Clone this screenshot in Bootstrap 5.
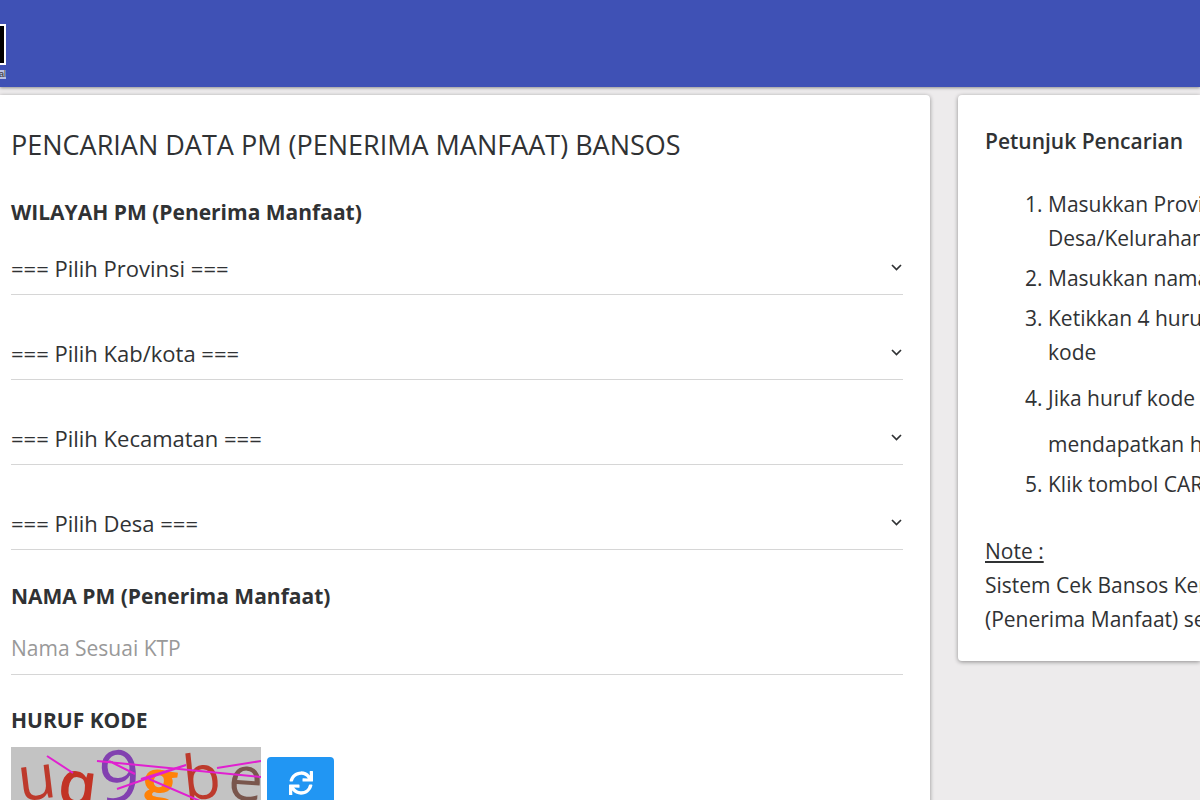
<!DOCTYPE html>
<html lang="id">
<head>
<meta charset="utf-8">
<meta name="viewport" content="width=device-width, initial-scale=1">
<title>Cek Bansos</title>
<link href="https://cdn.jsdelivr.net/npm/bootstrap@5.3.0/dist/css/bootstrap.min.css" rel="stylesheet">
<style>
body { background: #edebec; color: #303234; font-family: "Open Sans", "Noto Sans", sans-serif; font-size: 21px; line-height: 34px; }
.topbar { height: 87px; background: #3f51b5; box-shadow: 0 1px 3px rgba(0,0,0,.4); flex: none; }
.brand-mark { width: 6px; margin-top: 24px; }
.brand-mark svg { display: block; }
.panels { padding-top: 8px; gap: 28px; }
.panel { background: #fff; box-shadow: 0 1px 4px rgba(0,0,0,.4); }
.panel-search { flex: 0 0 77.5%; padding: 28px 27px 28px 11px; border-radius: 0 4px 4px 0; }
.panel-help { padding: 28px 0 25px 27px; border-radius: 4px 0 0 4px; white-space: nowrap; overflow: hidden; }
h1 { font-size: 27px; line-height: 44px; font-weight: 400; margin: 0 0 28px; }
.group-label { font-size: 21px; line-height: 34px; font-weight: 700; display: block; margin: 0; }
.line-field { height: 54px; padding: 0; border: 0; border-bottom: 1px solid #d6d6d6; border-radius: 0; font-size: 21px; line-height: 34px; color: #303234; background-color: transparent; }
.select-stack { padding-top: 12px; }
select.line-field { font-size: 22px; margin: 0 0 31px; background-position: right 1px center; background-size: 11px 11px;
  background-image: url("data:image/svg+xml,%3Csvg xmlns='http://www.w3.org/2000/svg' viewBox='0 0 11 11'%3E%3Cpath d='M1 3l4.500 4.500L10 3' fill='none' stroke='%23303234' stroke-width='1.700'/%3E%3C/svg%3E"); }
select.line-field:last-child { margin-bottom: 29px; }
.line-field::placeholder { color: #999; }
input.line-field { height: 62px; padding-top: 8px; margin-bottom: 28px; }
.captcha-row { margin-top: 10px; gap: 6px; }
.btn-reload { width: 67px; height: 52px; background: #2196f3; border-radius: 4px; margin-top: 10px; }
.captcha { width: 250px; height: 84px; flex: none; }
h2 { font-size: 21px; line-height: 36px; font-weight: 600; margin: 0 0 28px; }
.steps { padding-left: 63px; margin: 0 0 33px; }
.steps li { margin-bottom: 6px; }
.steps li.tall-step { line-height: 46px; margin-bottom: 0; }
.steps li:last-child { margin-bottom: 0; }
</style>
</head>
<body class="vh-100 overflow-hidden">
<header class="topbar position-relative">
  <a href="#" class="d-inline-block brand-mark" aria-label="Beranda">
    <svg width="6" height="56" viewBox="0 0 6 56"><path d="M0 0h6v41H0z" fill="#fff"/><path d="M0 2h4v37H0z"/><path d="M0 46h6v9H0z" fill="#b9bfe0"/><text x="6" y="53" text-anchor="end" font-size="9" font-family="Liberation Sans, sans-serif" fill="#333">al</text></svg>
  </a>
</header>
<main class="d-flex align-items-start panels">
  <form class="panel panel-search">
    <h1>PENCARIAN DATA PM (PENERIMA MANFAAT) BANSOS</h1>
    <label class="group-label" for="prov">WILAYAH PM (Penerima Manfaat)</label>
    <div class="select-stack">
      <select class="form-select line-field" id="prov"><option>=== Pilih Provinsi ===</option></select>
      <select class="form-select line-field" aria-label="Kab/kota"><option>=== Pilih Kab/kota ===</option></select>
      <select class="form-select line-field" aria-label="Kecamatan"><option>=== Pilih Kecamatan ===</option></select>
      <select class="form-select line-field" aria-label="Desa"><option>=== Pilih Desa ===</option></select>
    </div>
    <label class="group-label" for="nama">NAMA PM (Penerima Manfaat)</label>
    <input class="form-control line-field" id="nama" type="text" placeholder="Nama Sesuai KTP">
    <strong class="group-label">HURUF KODE</strong>
    <div class="d-flex align-items-start captcha-row">
      <svg class="captcha" viewBox="0 0 250 84" role="img" aria-label="Huruf kode">
        <path d="M0 0h250v84H0z" fill="#c3c3c3"/>
        <g font-family="Open Sans, sans-serif" font-size="62" font-weight="500">
          <text x="9" y="52" transform="rotate(-7 28 52)" fill="#bd3a2c">u</text>
          <text x="45" y="58" transform="rotate(7 62 58)" font-weight="600" fill="#c23325">q</text>
          <text x="89" y="55" transform="rotate(-3 110 55)" font-size="72" fill="#8240b0">9</text>
          <text x="128" y="57" transform="rotate(8 146 57)" font-weight="700" fill="#ff8208">g</text>
          <text x="174" y="52" transform="rotate(-6 190 52)" fill="#bd3a2c">b</text>
          <text x="216" y="53" transform="rotate(4 232 53)" fill="#79564d">e</text>
        </g>
        <path d="M36 9L62 26M86 14L250 30M106 42L175 18M206 21l44-7M98 14l26 13M138 32l58 25M130 32l45-14" fill="none" stroke="#e020d0" stroke-width="2"/>
      </svg>
      <button type="button" class="btn btn-reload p-0 d-flex align-items-center justify-content-center" aria-label="Muat ulang kode">
        <svg width="24" height="24" viewBox="0 0 512 512" fill="#fff"><path d="M440.650 12.570l4 82.770A247.160 247.160 0 0 0 255.830 8C134.730 8 33.910 94.920 12.290 209.820A12 12 0 0 0 24.090 224h49.050a12 12 0 0 0 11.670-9.260 175.910 175.910 0 0 1 317-56.940l-101.460-4.860a12 12 0 0 0-12.570 12v47.410a12 12 0 0 0 12 12H500a12 12 0 0 0 12-12V12a12 12 0 0 0-12-12h-47.370a12 12 0 0 0-11.980 12.570zM255.830 432a175.610 175.610 0 0 1-146-77.800l101.800 4.870a12 12 0 0 0 12.570-12v-47.400a12 12 0 0 0-12-12H12a12 12 0 0 0-12 12V500a12 12 0 0 0 12 12h47.350a12 12 0 0 0 12-12.600l-4.150-82.570A247.170 247.170 0 0 0 255.830 504c121.110 0 221.930-86.920 243.550-201.820a12 12 0 0 0-11.800-14.180h-49.050a12 12 0 0 0-11.670 9.260A175.860 175.860 0 0 1 255.830 432z"/></svg>
      </button>
    </div>
  </form>
  <aside class="panel panel-help flex-fill">
    <h2>Petunjuk Pencarian</h2>
    <ol class="steps">
      <li>Masukkan Provinsi<br>Desa/Kelurahan</li>
      <li>Masukkan nama</li>
      <li>Ketikkan 4 huruf<br>kode</li>
      <li class="tall-step">Jika huruf kode<br>mendapatkan h</li>
      <li>Klik tombol CARI</li>
    </ol>
    <div><u>Note :</u></div>
    <p class="m-0">Sistem Cek Bansos Kem<br>(Penerima Manfaat) se</p>
  </aside>
</main>
</body>
</html>
